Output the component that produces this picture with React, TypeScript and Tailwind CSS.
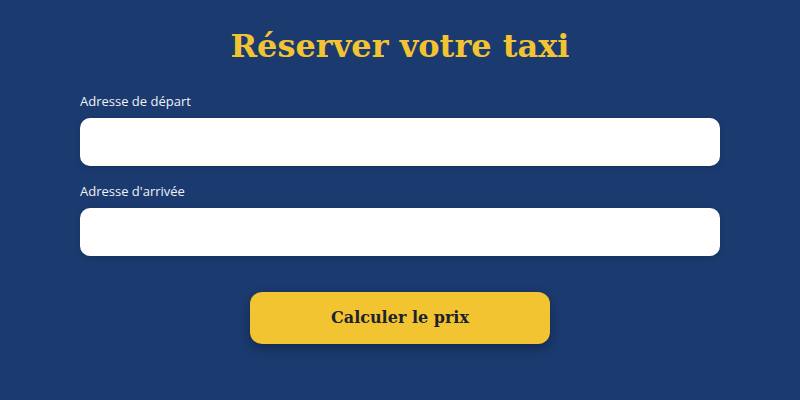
export default function App() {
  return (
    <div className="w-[800px] h-[400px] bg-[#1b3a6f] overflow-hidden px-20 pt-[24px]">
      <h1 className="text-center text-[#f2c431] font-bold text-[32px] leading-[44px] [font-family:'DejaVu_Serif','Liberation_Serif',serif]">
        Réserver votre taxi
      </h1>
      <div className="mt-[24px] flex flex-col">
        <label className="text-[#eef2f8] font-medium text-[13px] leading-[18px] [font-family:'Open_Sans',sans-serif]">Adresse de départ</label>
        <input className="mt-[8px] h-[48px] w-full rounded-[10px] bg-white shadow-[0_2px_6px_rgba(0,0,0,0.15)]" />
        <label className="mt-[16px] text-[#eef2f8] font-medium text-[13px] leading-[18px] [font-family:'Open_Sans',sans-serif]">Adresse d'arrivée</label>
        <input className="mt-[8px] h-[48px] w-full rounded-[10px] bg-white shadow-[0_2px_6px_rgba(0,0,0,0.15)]" />
      </div>
      <div className="mt-[36px] flex justify-center">
        <button className="w-[300px] h-[52px] rounded-[12px] bg-[#f2c431] text-[#1e2230] font-bold text-[16px] shadow-[0_4px_12px_rgba(0,0,0,0.3)] [font-family:'DejaVu_Serif','Liberation_Serif',serif]">
          Calculer le prix
        </button>
      </div>
    </div>
  );
}
